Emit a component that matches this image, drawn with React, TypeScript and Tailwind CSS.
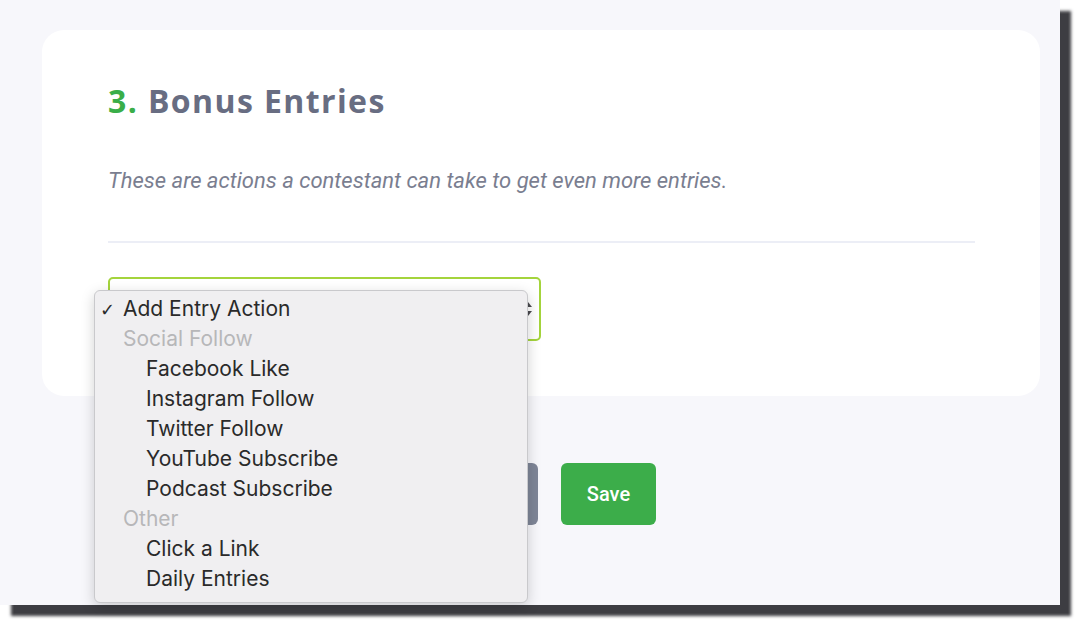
import React from "react";

type MenuItem = {
  label: string;
  kind: "selected" | "group" | "option";
};

const items: MenuItem[] = [
  { label: "Add Entry Action", kind: "selected" },
  { label: "Social Follow", kind: "group" },
  { label: "Facebook Like", kind: "option" },
  { label: "Instagram Follow", kind: "option" },
  { label: "Twitter Follow", kind: "option" },
  { label: "YouTube Subscribe", kind: "option" },
  { label: "Podcast Subscribe", kind: "option" },
  { label: "Other", kind: "group" },
  { label: "Click a Link", kind: "option" },
  { label: "Daily Entries", kind: "option" },
];

const SelectMenu = () => {
  return (
    <div className="absolute left-[94px] top-[290px] w-[434px] rounded-[6px] border border-[#c9c9cc] bg-[#f0eff1] pt-[3px] pb-[8px] shadow-[0_4px_14px_rgba(0,0,0,0.18)] font-['Inter',sans-serif] text-[21px]">
      {items.map((item) => (
        <div key={item.label} className="relative flex h-[30px] items-center">
          {item.kind === "selected" && (
            <span className="absolute left-[5px] font-['DejaVu_Sans',sans-serif] text-[18px] font-bold text-[#2a2a2a]">✓</span>
          )}
          <span
            className={
              item.kind === "group"
                ? "pl-[28px] text-[#b7b7b9]"
                : item.kind === "selected"
                ? "pl-[28px] text-[#2a2a2a]"
                : "pl-[51px] text-[#2a2a2a]"
            }
          >
            {item.label}
          </span>
        </div>
      ))}
    </div>
  );
};

const App = () => {
  return (
    <div className="relative h-[623px] w-[1078px] overflow-hidden bg-white">
      <div className="relative h-[605px] w-[1060px] bg-[#f7f7fb] shadow-[11px_11px_3px_rgba(45,44,50,0.92)]">
        <div className="pl-[42px] pt-[30px]">
          <div className="h-[366px] w-[998px] rounded-[22px] bg-white pl-[66px] pt-[51px]">
            <h2 className="font-['Open_Sans',sans-serif] text-[32px] font-bold leading-[40px] tracking-[1.4px] text-[#686d82]">
              <span className="text-[#3aae49]">3.</span> Bonus Entries
            </h2>
            <p className="mt-[46px] font-['Roboto',sans-serif] text-[22px] italic leading-[28px] text-[#7a7e90]">
              These are actions a contestant can take to get even more entries.
            </p>
            <div className="mt-[46px] h-[2px] w-[867px] bg-[#eceef6]"></div>
            <div className="mt-[34px] flex h-[64px] w-[433px] items-center justify-end rounded-[5px] border-2 border-[#a4d43c] pr-[6px]">
              <svg width="10" height="20" viewBox="0 0 10 20">
                <path d="M5 3 L9 8 L1 8 Z" fill="#4a4a4f" />
                <path d="M5 17 L9 12 L1 12 Z" fill="#4a4a4f" />
              </svg>
            </div>
          </div>
        </div>
        <div className="mt-[67px] flex gap-[23px] pl-[400px]">
          <button className="h-[62px] w-[138px] rounded-[6px] bg-[#7e8597]"></button>
          <button className="h-[62px] w-[95px] rounded-[6px] bg-[#3cad4a] font-['Roboto',sans-serif] text-[20px] font-medium text-white">
            Save
          </button>
        </div>
        <SelectMenu />
      </div>
    </div>
  );
};

export default App;
